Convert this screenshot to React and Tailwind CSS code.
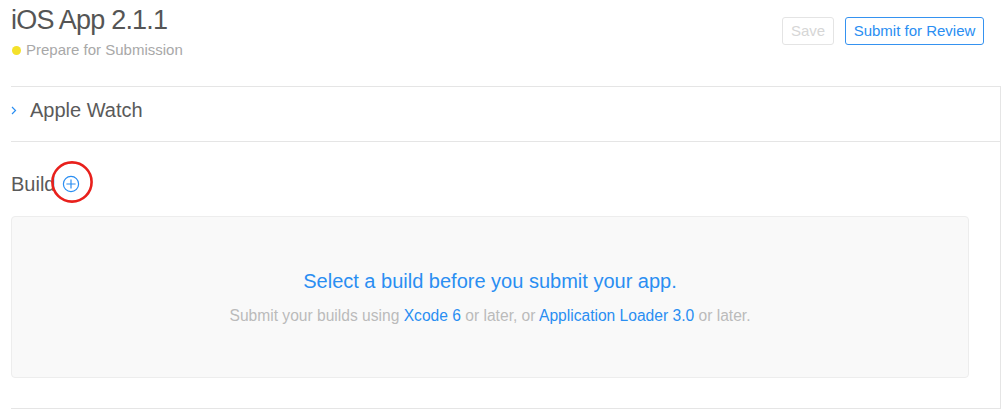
import React from "react";

const font = { fontFamily: '"Liberation Sans", Arial, sans-serif' };

function PlusCircle() {
  return (
    <svg width="18" height="18" viewBox="0 0 18 18" className="text-[#2a8ef2]">
      <circle cx="9" cy="9" r="7.6" fill="none" stroke="currentColor" strokeWidth="1.2" />
      <path d="M9 4.4v9.2M4.4 9h9.2" stroke="currentColor" strokeWidth="1.2" />
    </svg>
  );
}

export default function App() {
  return (
    <div className="bg-white w-[1004px] h-[410px] overflow-hidden" style={font}>
      {/* Header */}
      <div className="flex justify-between h-[86px] pl-[11px] pr-[20px]">
        <div className="pt-[5px]">
          <h1 className="text-[27px] leading-[30px] tracking-[-0.8px] text-[#555] font-normal">
            iOS App 2.1.1
          </h1>
          <div className="flex items-center mt-[5px] h-[20px]">
            <span className="w-[9px] h-[9px] rounded-full bg-[#f4e12a] ml-[1px] mr-[5px]" />
            <span className="text-[15px] text-[#a8a8a8]">Prepare for Submission</span>
          </div>
        </div>
        <div className="flex gap-[11px] pt-[17px]">
          <button className="h-[28px] w-[52px] border border-[#e4e4e4] rounded-[3px] text-[15px] text-[#d6d6d6]">
            Save
          </button>
          <button className="h-[28px] w-[139px] border border-[#3592f0] rounded-[3px] text-[15px] text-[#2a8ef2]">
            Submit for Review
          </button>
        </div>
      </div>

      {/* Section */}
      <div className="ml-[11px] w-[990px] border-t border-r border-b border-[#e5e5e5]">
        <div className="flex items-center pt-[11px] pb-[19px] border-b border-[#e5e5e5]">
          <svg width="6" height="9" viewBox="0 0 6 9" className="mr-[13px]">
            <path d="M1 1l3.5 3.5L1 8" fill="none" stroke="#2a8ef2" strokeWidth="1.2" />
          </svg>
          <span className="text-[20px] leading-[24px] text-[#5a5a5a]">Apple Watch</span>
        </div>

        <div className="pt-[30px] pb-[30px] pr-[31px]">
          <div className="relative flex items-center h-[24px] mb-[20px]">
            <span className="text-[20px] leading-[24px] text-[#5a5a5a]">Build</span>
            <span className="ml-[7px] mt-[-1px] flex">
              <PlusCircle />
            </span>
            <svg
              width="46"
              height="46"
              viewBox="0 0 46 46"
              className="absolute left-[38px] top-[-13px] pointer-events-none"
            >
              <circle cx="23" cy="23" r="19.6" fill="none" stroke="#e8201c" strokeWidth="2.6" />
            </svg>
          </div>

          <div className="h-[162px] bg-[#f9f9f9] border border-[#ededed] rounded-[4px] pt-[52px] text-center">
            <p className="text-[20px] leading-[24px] text-[#2a8ef2]">
              Select a build before you submit your app.
            </p>
            <p className="mt-[13px] text-[15.6px] leading-[20px] text-[#bbbbbb]">
              Submit your builds using <span className="text-[#2a8ef2]">Xcode 6</span> or later, or{" "}
              <span className="text-[#2a8ef2]">Application Loader 3.0</span> or later.
            </p>
          </div>
        </div>
      </div>
    </div>
  );
}
